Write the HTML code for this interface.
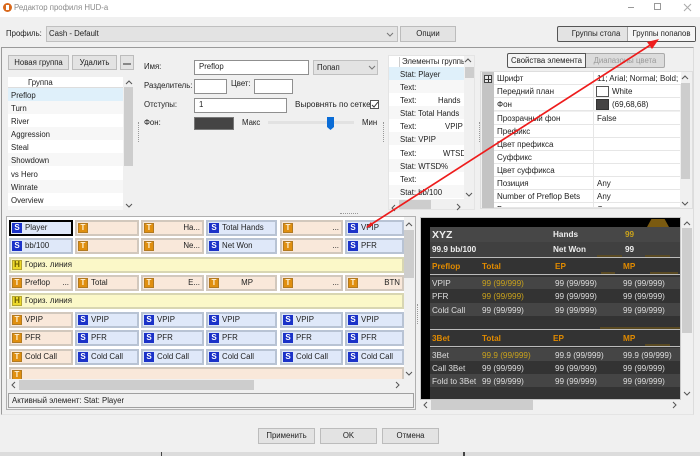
<!DOCTYPE html>
<html><head><meta charset="utf-8"><style>
*{box-sizing:border-box}
html,body{margin:0;padding:0}
body{width:700px;height:456px;background:#f0f0f0;position:relative;overflow:hidden;font:7.8px/13px "Liberation Sans",sans-serif;color:#222}
div,span{position:absolute;white-space:nowrap}
.t{line-height:12px}
.btn{background:#e3e3e3;border:1px solid #bcbcbc;text-align:center;line-height:14px;color:#222}
.inp{background:#fff;border:1px solid #8f8f8f;padding-left:4px;line-height:12px}
.sb{background:#f0f0f0}.th{background:#cdcdcd}
.row{left:0;width:100%;height:13px;padding-left:3px;line-height:15px;white-space:pre}
.alt{background:#f7f7f7}
.c{height:16px;border:2px solid #b8c3d4;background:#dfe8f9;line-height:12px;padding-left:14px;overflow:hidden;font-size:7.9px}
.c.T{border-color:#d2c8bd;background:#f9e8da}
.c.H{border-color:#d8d6b2;background:#fbf8c8;left:9px;width:395px}
.c i{position:absolute;left:1px;top:1px;width:10px;height:10px;background:#1b32c8;color:#fff;font:bold 8px/10px "Liberation Sans",sans-serif;text-align:center}
.c.T i{background:#e08f10;color:#fff2d8;outline:1px solid #b27a20;outline-offset:-1px}
.c.H i{background:#ecd92a;color:#6b5c00;outline:1px solid #b5a530;outline-offset:-1px}
.c span{right:2px;top:0}
.a1{left:9px;width:64px}.a2{left:75px;width:64px}.a3{left:141px;width:63px}.a4{left:206px;width:71px}.a5{left:280px;width:63px}.a6{left:345px;width:59px}
.p{height:13px;line-height:13px;font-size:8.2px;color:#ddd;font-family:"Liberation Sans",sans-serif}
.band{left:430px;width:250px}
.o{color:#e08a00;font-weight:bold}.y{color:#c9a21c}.w{color:#eee;font-weight:bold}
.k{height:1px;left:430px;width:250px;background:#bbb}
.br{background:#5a4a22;height:2px}
.pr{left:494px;width:99px;height:13px;line-height:14px;padding-left:3px;border-bottom:1px solid #e6e6e6;background:#fff;font-size:8px}
.pv{left:593px;width:87px;height:13px;line-height:14px;padding-left:3px;border-bottom:1px solid #e6e6e6;border-left:1px solid #e6e6e6;background:#fff;font-size:8px}
</style></head><body>
<!-- title bar -->
<div style="left:0;top:0;width:700px;height:17px;background:#fff"></div>
<div style="left:3px;top:3px;width:9px;height:9px;border-radius:50%;background:#d9691c"></div>
<div style="left:6px;top:5px;width:3px;height:5px;background:#fff"></div>
<div class="t" style="left:14px;top:2px;color:#8a8a8a">Редактор профиля HUD-а</div>
<div style="left:628px;top:7px;width:6px;height:1px;background:#999"></div>
<div style="left:654px;top:3px;width:7px;height:7px;border:1px solid #999"></div>
<svg style="position:absolute;left:683px;top:3px" width="9" height="9"><path d="M1 1L8 8M8 1L1 8" stroke="#aaa" fill="none"/></svg>
<!-- profile -->
<div class="t" style="left:6px;top:28px">Профиль:</div>
<div style="left:46px;top:26px;width:352px;height:16px;background:#e3e3e3;border:1px solid #c0c0c0;padding-left:2px;line-height:14px">Cash - Default</div>
<svg style="position:absolute;left:386px;top:32px" width="8" height="5"><path d="M1 1L4 4L7 1" stroke="#777" fill="none"/></svg>
<div class="btn" style="left:400px;top:26px;width:56px;height:16px">Опции</div>
<div style="left:557px;top:26px;width:139px;height:16px;border:1px solid #555;border-radius:2px;background:#e3e3e3"></div>
<div class="t" style="left:566px;top:28px;width:60px;text-align:center">Группы стола</div>
<div style="left:627px;top:27px;width:68px;height:14px;background:#f5f5f5;border-left:1px solid #aaa;text-align:center;line-height:14px">Группы попапов</div>
<!-- main frame -->
<div style="left:1px;top:47px;width:693px;height:368px;border:1px solid #9a9a9a;border-bottom-color:#e4e4e4;border-right-color:#dcdcdc;background:#f0f0f0"></div>
<!-- group list -->
<div class="btn" style="left:8px;top:55px;width:61px;height:15px">Новая группа</div>
<div class="btn" style="left:72px;top:55px;width:45px;height:15px">Удалить</div>
<div class="btn" style="left:120px;top:55px;width:14px;height:15px"></div>
<div style="left:123px;top:63px;width:8px;height:2px;background:#888"></div>
<div style="left:8px;top:77px;width:125px;height:133px;background:#fff;overflow:hidden">
<div style="left:0;top:0;width:115px;height:11px;background:#fff;border-bottom:1px solid #ddd;padding-left:20px;line-height:11px">Группа</div>
<div class="row" style="top:11px;background:#dff0fa">Preflop</div>
<div class="row alt" style="top:24px">Turn</div>
<div class="row" style="top:37px">River</div>
<div class="row alt" style="top:50px">Aggression</div>
<div class="row" style="top:63px">Steal</div>
<div class="row alt" style="top:76px">Showdown</div>
<div class="row" style="top:90px">vs Hero</div>
<div class="row alt" style="top:103px">Winrate</div>
<div class="row" style="top:116px">Overview</div>
<div class="row alt" style="top:129px">Multi-Bet</div>
<div class="sb" style="left:115px;top:0;width:10px;height:134px"></div>
<div class="th" style="left:116px;top:10px;width:9px;height:79px"></div>
</div>
<svg style="position:absolute;left:125px;top:80px" width="8" height="5"><path d="M1 4L4 1L7 4" stroke="#555" fill="none"/></svg>
<svg style="position:absolute;left:125px;top:203px" width="8" height="5"><path d="M1 1L4 4L7 1" stroke="#555" fill="none"/></svg>
<!-- form -->
<div class="t" style="left:144px;top:61px">Имя:</div>
<div class="inp" style="left:194px;top:60px;width:115px;height:15px">Preflop</div>
<div style="left:313px;top:60px;width:65px;height:15px;background:#e3e3e3;border:1px solid #c0c0c0;padding-left:3px;line-height:13px">Попап</div>
<svg style="position:absolute;left:368px;top:65px" width="8" height="5"><path d="M1 1L4 4L7 1" stroke="#777" fill="none"/></svg>
<div class="t" style="left:144px;top:80px">Разделитель:</div>
<div class="inp" style="left:194px;top:79px;width:33px;height:15px"></div>
<div class="t" style="left:231px;top:78px">Цвет:</div>
<div class="inp" style="left:254px;top:79px;width:39px;height:15px"></div>
<div class="t" style="left:144px;top:99px">Отступы:</div>
<div class="inp" style="left:194px;top:98px;width:93px;height:15px">1</div>
<div class="t" style="left:295px;top:99px;font-size:8.2px">Выровнять по сетке</div>
<div style="left:370px;top:100px;width:9px;height:9px;border:1px solid #555;background:#fff"></div>
<svg style="position:absolute;left:371px;top:101px" width="8" height="8"><path d="M1 4L3 6L7 1" stroke="#333" fill="none"/></svg>
<div class="t" style="left:144px;top:117px">Фон:</div>
<div style="left:194px;top:117px;width:40px;height:13px;background:#454444;border:1px solid #777"></div>
<div class="t" style="left:242px;top:117px">Макс</div>
<div style="left:268px;top:121px;width:86px;height:3px;background:#e2e2e2"></div>
<div style="left:327px;top:117px;width:7px;height:10px;background:#0a6cd6"></div>
<svg style="position:absolute;left:327px;top:127px" width="7" height="3"><path d="M0 0H7L3.5 3Z" fill="#0a6cd6"/></svg>
<div class="t" style="left:362px;top:117px">Мин</div>
<!-- elements list -->
<div style="left:388px;top:55px;width:87px;height:155px;background:#fff;border:1px solid #e4e4e4;overflow:hidden">
<div style="left:10px;top:1px;width:65px;height:10px;line-height:10px;overflow:hidden;border-left:1px solid #ccc;padding-left:2px">Элементы группы</div>
<div class="row" style="top:11px;background:#dff0fa;padding-left:11px">Stat: Player</div>
<div class="row alt" style="top:24px;padding-left:11px">Text:</div>
<div class="row" style="top:37px;padding-left:11px">Text:</div><span style="left:49px;top:37px;line-height:15px">Hands</span>
<div class="row alt" style="top:50px;padding-left:11px">Stat: Total Hands</div>
<div class="row" style="top:63px;padding-left:11px">Text:</div><span style="left:56px;top:63px;line-height:15px">VPIP</span>
<div class="row alt" style="top:76px;padding-left:11px">Stat: VPIP</div>
<div class="row" style="top:90px;padding-left:11px">Text:</div><span style="left:54px;top:90px;line-height:15px">WTSD</span>
<div class="row alt" style="top:103px;padding-left:11px">Stat: WTSD%</div>
<div class="row" style="top:116px;padding-left:11px">Text:</div>
<div class="row alt" style="top:129px;padding-left:11px">Stat: bb/100</div>
<div class="sb" style="left:75px;top:0;width:11px;height:155px"></div>
<div class="th" style="left:76px;top:11px;width:9px;height:11px"></div>
<div class="sb" style="left:0;top:143px;width:86px;height:11px"></div>
<div class="th" style="left:10px;top:144px;width:32px;height:9px"></div>
</div>
<svg style="position:absolute;left:464px;top:58px" width="8" height="5"><path d="M1 4L4 1L7 4" stroke="#555" fill="none"/></svg>
<svg style="position:absolute;left:465px;top:192px" width="8" height="5"><path d="M1 1L4 4L7 1" stroke="#555" fill="none"/></svg>
<svg style="position:absolute;left:391px;top:204px" width="5" height="8"><path d="M4 1L1 4L4 7" stroke="#555" fill="none"/></svg>
<svg style="position:absolute;left:456px;top:203px" width="5" height="8"><path d="M1 1L4 4L1 7" stroke="#555" fill="none"/></svg>
<!-- props tabs -->
<div style="left:507px;top:53px;width:79px;height:15px;border:1px solid #555;border-radius:2px 0 0 2px;background:#f5f5f5;text-align:center;line-height:13px">Свойства элемента</div>
<div style="left:586px;top:53px;width:79px;height:15px;border:1px solid #aaa;border-left:0;border-radius:0 2px 2px 0;background:#dcdcdc;color:#999;text-align:center;line-height:13px">Диапазоны цвета</div>
<!-- props grid -->
<div style="left:480px;top:71px;width:213px;height:138px;background:#f0f0f0;border:1px solid #dedede"></div>
<div style="left:482px;top:72px;width:12px;height:136px;background:#c4c4c4"></div>
<div class="pr" style="top:72px">Шрифт</div><div class="pv" style="top:72px;overflow:hidden;width:88px">11; Arial; Normal; Bold; I</div>
<div style="left:484px;top:75px;width:8px;height:8px;border:1px solid #444;background:#e8e8e8"></div>
<div style="left:488px;top:76px;width:1px;height:6px;background:#333"></div>
<div style="left:485px;top:79px;width:6px;height:1px;background:#333"></div>
<div class="pr" style="top:85px">Передний план</div><div class="pv" style="top:85px;padding-left:18px">White</div>
<div style="left:596px;top:86px;width:13px;height:11px;background:#fff;border:1px solid #555"></div>
<div class="pr" style="top:98px">Фон</div><div class="pv" style="top:98px;padding-left:18px">(69,68,68)</div>
<div style="left:596px;top:99px;width:13px;height:11px;background:#454444;border:1px solid #333"></div>
<div class="pr" style="top:112px">Прозрачный фон</div><div class="pv" style="top:112px">False</div>
<div class="pr" style="top:125px">Префикс</div><div class="pv" style="top:125px"></div>
<div class="pr" style="top:138px">Цвет префикса</div><div class="pv" style="top:138px"></div>
<div class="pr" style="top:151px">Суффикс</div><div class="pv" style="top:151px"></div>
<div class="pr" style="top:164px">Цвет суффикса</div><div class="pv" style="top:164px"></div>
<div class="pr" style="top:177px">Позиция</div><div class="pv" style="top:177px">Any</div>
<div class="pr" style="top:190px">Number of Preflop Bets</div><div class="pv" style="top:190px">Any</div>
<div class="pr" style="top:203px;height:5px;overflow:hidden">Вид статистики</div><div class="pv" style="top:203px;height:5px;overflow:hidden">С</div>
<div class="th" style="left:681px;top:83px;width:9px;height:96px"></div>
<svg style="position:absolute;left:681px;top:75px" width="8" height="5"><path d="M1 4L4 1L7 4" stroke="#555" fill="none"/></svg>
<svg style="position:absolute;left:681px;top:201px" width="8" height="5"><path d="M1 1L4 4L7 1" stroke="#555" fill="none"/></svg>
<!-- splitter dots -->
<div style="left:138px;top:122px;width:1px;height:20px;border-left:1px dotted #999"></div>
<div style="left:383px;top:122px;width:1px;height:20px;border-left:1px dotted #999"></div>
<div style="left:479px;top:122px;width:1px;height:20px;border-left:1px dotted #999"></div>
<div style="left:340px;top:213px;width:18px;height:1px;border-top:1px dotted #999"></div>
<div style="left:417px;top:304px;width:1px;height:20px;border-left:1px dotted #999"></div>
<!-- cell area -->
<div style="left:6px;top:216px;width:410px;height:194px;border:1px solid #b0b0b0;background:#f0f0f0"></div>
<div style="left:7px;top:217px;width:397px;height:162px;background:#fff"></div>
<div class="c a1" style="top:220px;border-color:#000;background:#dfe8f9"><i>S</i>Player</div>
<div class="c T a2" style="top:220px"><i>T</i></div>
<div class="c T a3" style="top:220px"><i>T</i><span>Ha...</span></div>
<div class="c a4" style="top:220px"><i>S</i>Total Hands</div>
<div class="c T a5" style="top:220px"><i>T</i><span>...</span></div>
<div class="c a6" style="top:220px"><i>S</i>VPIP</div>
<div class="c a1" style="top:238px"><i>S</i>bb/100</div>
<div class="c T a2" style="top:238px"><i>T</i></div>
<div class="c T a3" style="top:238px"><i>T</i><span>Ne...</span></div>
<div class="c a4" style="top:238px"><i>S</i>Net Won</div>
<div class="c T a5" style="top:238px"><i>T</i><span>...</span></div>
<div class="c a6" style="top:238px"><i>S</i>PFR</div>
<div class="c H" style="top:257px"><i>H</i>Гориз. линия</div>
<div class="c T a1" style="top:275px"><i>T</i>Preflop<span>...</span></div>
<div class="c T a2" style="top:275px"><i>T</i>Total</div>
<div class="c T a3" style="top:275px"><i>T</i><span>E...</span></div>
<div class="c T a4" style="top:275px"><i>T</i><span style="right:22px">MP</span></div>
<div class="c T a5" style="top:275px"><i>T</i><span>...</span></div>
<div class="c T a6" style="top:275px"><i>T</i><span>BTN</span></div>
<div class="c H" style="top:293px"><i>H</i>Гориз. линия</div>
<div class="c T a1" style="top:312px"><i>T</i>VPIP</div>
<div class="c a2" style="top:312px"><i>S</i>VPIP</div>
<div class="c a3" style="top:312px"><i>S</i>VPIP</div>
<div class="c a4" style="top:312px"><i>S</i>VPIP</div>
<div class="c a5" style="top:312px"><i>S</i>VPIP</div>
<div class="c a6" style="top:312px"><i>S</i>VPIP</div>
<div class="c T a1" style="top:330px"><i>T</i>PFR</div>
<div class="c a2" style="top:330px"><i>S</i>PFR</div>
<div class="c a3" style="top:330px"><i>S</i>PFR</div>
<div class="c a4" style="top:330px"><i>S</i>PFR</div>
<div class="c a5" style="top:330px"><i>S</i>PFR</div>
<div class="c a6" style="top:330px"><i>S</i>PFR</div>
<div class="c T a1" style="top:349px"><i>T</i>Cold Call</div>
<div class="c a2" style="top:349px"><i>S</i>Cold Call</div>
<div class="c a3" style="top:349px"><i>S</i>Cold Call</div>
<div class="c a4" style="top:349px"><i>S</i>Cold Call</div>
<div class="c a5" style="top:349px"><i>S</i>Cold Call</div>
<div class="c a6" style="top:349px"><i>S</i>Cold Call</div>
<div class="c T" style="left:9px;top:367px;width:395px;height:12px;border-bottom:0"><i>T</i></div>
<!-- scrollbars -->
<div class="th" style="left:404px;top:230px;width:10px;height:48px"></div>
<svg style="position:absolute;left:405px;top:222px" width="8" height="5"><path d="M1 4L4 1L7 4" stroke="#555" fill="none"/></svg>
<svg style="position:absolute;left:405px;top:371px" width="8" height="5"><path d="M1 1L4 4L7 1" stroke="#555" fill="none"/></svg>
<div class="th" style="left:19px;top:380px;width:235px;height:10px"></div>
<svg style="position:absolute;left:11px;top:381px" width="5" height="8"><path d="M4 1L1 4L4 7" stroke="#555" fill="none"/></svg>
<svg style="position:absolute;left:395px;top:381px" width="5" height="8"><path d="M1 1L4 4L1 7" stroke="#555" fill="none"/></svg>
<div style="left:8px;top:393px;width:406px;height:15px;border:1px solid #a0a0a0;background:#f0f0f0;padding-left:3px;line-height:13px">Активный элемент: Stat: Player</div>
<!-- preview -->
<div style="left:420px;top:217px;width:261px;height:183px;background:#000;border:1px solid #c8c8c8"></div>
<div style="left:430px;top:227px;width:250px;height:172px;background:#333"></div>
<div style="left:647px;top:219px;width:22px;height:8px;background:#7a5a10;clip-path:polygon(20% 0,80% 0,100% 100%,0 100%)"></div>
<div class="band" style="top:227px;height:15px;background:#474747"></div>
<div class="band" style="top:242px;height:15px;background:#404040"></div>
<div class="br" style="left:597px;top:255px;width:25px"></div>
<div class="br" style="left:645px;top:255px;width:25px"></div>
<div class="k" style="top:257px"></div>
<div class="band" style="top:258px;height:16px;background:#333"></div>
<div class="br" style="left:601px;top:272px;width:14px"></div>
<div class="br" style="left:650px;top:272px;width:28px"></div>
<div class="k" style="top:274px"></div>
<div class="band" style="top:277px;height:12px;background:#454545"></div>
<div class="band" style="top:303px;height:13px;background:#454545"></div>
<div class="br" style="left:600px;top:327px;width:80px"></div>
<div class="k" style="top:329px"></div>
<div class="br" style="left:645px;top:344px;width:25px"></div>
<div class="k" style="top:346px"></div>
<div class="band" style="top:348px;height:13px;background:#454545"></div>
<div class="band" style="top:374px;height:13px;background:#454545"></div>
<div class="p w" style="left:432px;top:229px;font-size:10.5px">XYZ</div>
<div class="p w" style="left:553px;top:228px">Hands</div><div class="p y" style="left:625px;top:228px;font-weight:bold">99</div>
<div class="p w" style="left:432px;top:243px">99.9 bb/100</div><div class="p w" style="left:553px;top:243px">Net Won</div><div class="p w" style="left:625px;top:243px">99</div>
<div class="p o" style="left:432px;top:260px">Preflop</div><div class="p o" style="left:482px;top:260px">Total</div><div class="p o" style="left:555px;top:260px">EP</div><div class="p o" style="left:623px;top:260px">MP</div>
<div class="p" style="left:432px;top:277px">VPIP</div><div class="p y" style="left:482px;top:277px">99 (99/999)</div><div class="p" style="left:555px;top:277px">99 (99/999)</div><div class="p" style="left:623px;top:277px">99 (99/999)</div>
<div class="p" style="left:432px;top:290px">PFR</div><div class="p y" style="left:482px;top:290px">99 (99/999)</div><div class="p" style="left:555px;top:290px">99 (99/999)</div><div class="p" style="left:623px;top:290px">99 (99/999)</div>
<div class="p" style="left:432px;top:304px">Cold Call</div><div class="p" style="left:482px;top:304px">99 (99/999)</div><div class="p" style="left:555px;top:304px">99 (99/999)</div><div class="p" style="left:623px;top:304px">99 (99/999)</div>
<div class="p o" style="left:432px;top:332px">3Bet</div><div class="p o" style="left:482px;top:332px">Total</div><div class="p o" style="left:553px;top:332px">EP</div><div class="p o" style="left:623px;top:332px">MP</div>
<div class="p" style="left:432px;top:349px">3Bet</div><div class="p y" style="left:482px;top:349px">99.9 (99/999)</div><div class="p" style="left:555px;top:349px">99.9 (99/999)</div><div class="p" style="left:623px;top:349px">99.9 (99/999)</div>
<div class="p" style="left:432px;top:362px">Call 3Bet</div><div class="p" style="left:482px;top:362px">99 (99/999)</div><div class="p" style="left:555px;top:362px">99 (99/999)</div><div class="p" style="left:623px;top:362px">99 (99/999)</div>
<div class="p" style="left:432px;top:375px">Fold to 3Bet</div><div class="p" style="left:482px;top:375px">99 (99/999)</div><div class="p" style="left:555px;top:375px">99 (99/999)</div><div class="p" style="left:623px;top:375px">99 (99/999)</div>
<div class="th" style="left:682px;top:228px;width:10px;height:105px"></div>
<svg style="position:absolute;left:683px;top:221px" width="8" height="5"><path d="M1 4L4 1L7 4" stroke="#555" fill="none"/></svg>
<svg style="position:absolute;left:683px;top:391px" width="8" height="5"><path d="M1 1L4 4L7 1" stroke="#555" fill="none"/></svg>
<div class="th" style="left:431px;top:400px;width:102px;height:10px"></div>
<svg style="position:absolute;left:423px;top:401px" width="5" height="8"><path d="M4 1L1 4L4 7" stroke="#555" fill="none"/></svg>
<svg style="position:absolute;left:672px;top:401px" width="5" height="8"><path d="M1 1L4 4L1 7" stroke="#555" fill="none"/></svg>
<!-- bottom buttons -->
<div class="btn" style="left:258px;top:428px;width:57px;height:16px">Применить</div>
<div class="btn" style="left:320px;top:428px;width:57px;height:16px">OK</div>
<div class="btn" style="left:382px;top:428px;width:57px;height:16px">Отмена</div>
<div style="left:0;top:452px;width:700px;height:4px;background:#dcdcdc"></div>
<div style="left:161px;top:452px;width:1px;height:4px;background:#444"></div>
<div style="left:463px;top:452px;width:2px;height:4px;background:#444"></div>
<!-- arrow -->
<svg style="position:absolute;left:0;top:0" width="700" height="456">
<line x1="367" y1="227" x2="655" y2="42" stroke="#ee1c1c" stroke-width="1.7"/>
<path d="M659 39L647 42L652 49Z" fill="#ee1c1c"/>
<path d="M366 228L373 225.5L371 222Z" fill="#ee1c1c"/>
</svg>
</body></html>
